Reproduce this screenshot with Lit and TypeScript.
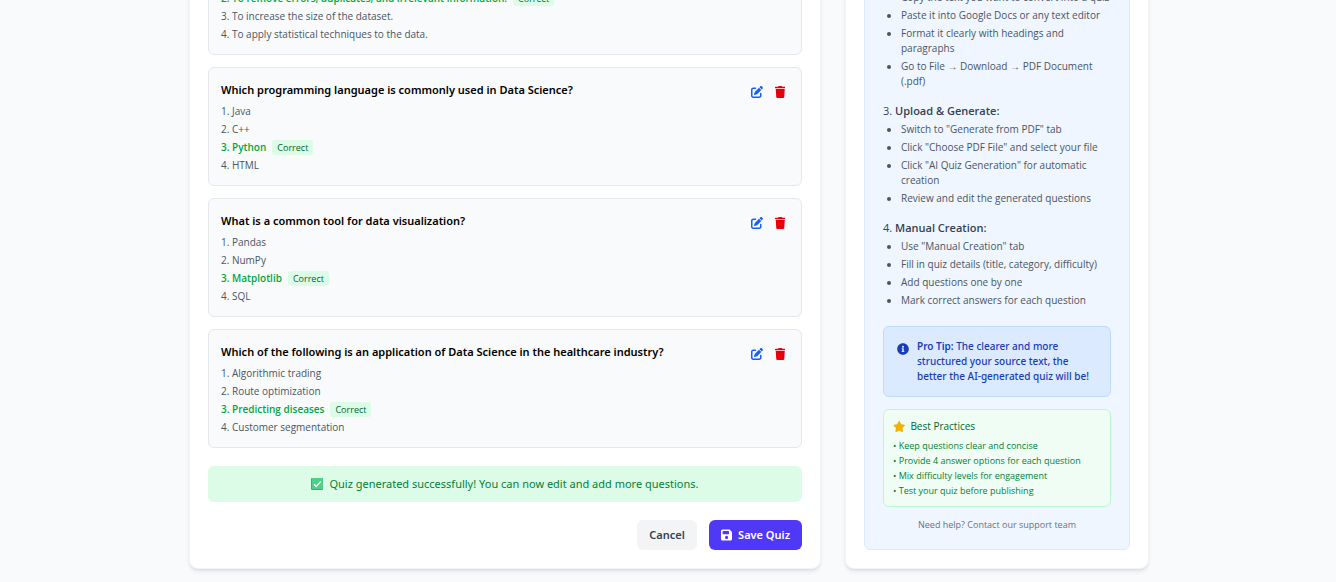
import { LitElement, html, css, svg, nothing } from "lit";
import { customElement, property, state } from "lit/decorators.js";
import { classMap } from "lit/directives/class-map.js";

interface Question {
  title?: string;
  first: number;
  options: string[];
  correct: number;
}

interface Step {
  number?: number;
  title?: string;
  items: string[];
}

const QUESTIONS: Question[] = [
  {
    first: 2,
    options: [
      "To remove errors, duplicates, and irrelevant information.",
      "To increase the size of the dataset.",
      "To apply statistical techniques to the data.",
    ],
    correct: 2,
  },
  {
    title: "Which programming language is commonly used in Data Science?",
    first: 1,
    options: ["Java", "C++", "Python", "HTML"],
    correct: 3,
  },
  {
    title: "What is a common tool for data visualization?",
    first: 1,
    options: ["Pandas", "NumPy", "Matplotlib", "SQL"],
    correct: 3,
  },
  {
    title:
      "Which of the following is an application of Data Science in the healthcare industry?",
    first: 1,
    options: [
      "Algorithmic trading",
      "Route optimization",
      "Predicting diseases",
      "Customer segmentation",
    ],
    correct: 3,
  },
];

const STEPS: Step[] = [
  {
    items: [
      "Copy the text you want to convert into a quiz",
      "Paste it into Google Docs or any text editor",
      "Format it clearly with headings and paragraphs",
      "Go to File → Download → PDF Document (.pdf)",
    ],
  },
  {
    number: 3,
    title: "Upload & Generate:",
    items: [
      'Switch to "Generate from PDF" tab',
      'Click "Choose PDF File" and select your file',
      'Click "AI Quiz Generation" for automatic creation',
      "Review and edit the generated questions",
    ],
  },
  {
    number: 4,
    title: "Manual Creation:",
    items: [
      'Use "Manual Creation" tab',
      "Fill in quiz details (title, category, difficulty)",
      "Add questions one by one",
      "Mark correct answers for each question",
    ],
  },
];

const PRACTICES = [
  "Keep questions clear and concise",
  "Provide 4 answer options for each question",
  "Mix difficulty levels for engagement",
  "Test your quiz before publishing",
];

const icon = (viewBox: string, d: string) => html`
  <svg class="icon" viewBox=${viewBox} aria-hidden="true">${svg`<path fill="currentColor" d=${d}></path>`}</svg>
`;

const editIcon = icon(
  "0 0 512 512",
  "M471.6 21.7c-21.9-21.9-57.3-21.9-79.2 0L362.3 51.7l97.9 97.9 30.1-30.1c21.9-21.9 21.9-57.3 0-79.2L471.6 21.7zm-299.2 220c-6.1 6.1-10.8 13.6-13.5 21.9l-29.6 88.8c-2.9 8.6-.6 18.1 5.8 24.6s15.9 8.7 24.6 5.8l88.8-29.6c8.2-2.7 15.7-7.4 21.9-13.5L437.7 172.3 339.7 74.3 172.4 241.7zM96 64C43 64 0 107 0 160V416c0 53 43 96 96 96H352c53 0 96-43 96-96V320c0-17.7-14.3-32-32-32s-32 14.3-32 32v96c0 17.7-14.3 32-32 32H96c-17.7 0-32-14.3-32-32V160c0-17.7 14.3-32 32-32h96c17.7 0 32-14.3 32-32s-14.3-32-32-32H96z"
);
const trashIcon = icon(
  "0 0 448 512",
  "M432 32H312l-9.4-18.7A24 24 0 0 0 281.1 0H166.8a23.72 23.72 0 0 0-21.4 13.3L136 32H16A16 16 0 0 0 0 48v32a16 16 0 0 0 16 16h416a16 16 0 0 0 16-16V48a16 16 0 0 0-16-16zM53.2 467a48 48 0 0 0 47.9 45h245.8a48 48 0 0 0 47.9-45L416 128H32z"
);
const saveIcon = icon(
  "0 16 448 480",
  "M64 32C28.7 32 0 60.7 0 96V416c0 35.3 28.7 64 64 64H384c35.3 0 64-28.7 64-64V173.3c0-17-6.7-33.3-18.7-45.3L352 50.7C340 38.7 323.7 32 306.7 32H64zm0 96c0-17.7 14.3-32 32-32H288c17.7 0 32 14.3 32 32v64c0 17.7-14.3 32-32 32H96c-17.7 0-32-14.3-32-32V128zM224 288a64 64 0 1 1 0 128 64 64 0 1 1 0-128z"
);
const infoIcon = icon(
  "0 0 512 512",
  "M256 8C119 8 8 119.1 8 256c0 137 111 248 248 248s248-111 248-248C504 119.1 393 8 256 8zm0 110c23.2 0 42 18.8 42 42s-18.8 42-42 42-42-18.8-42-42 18.8-42 42-42zm56 254c0 6.6-5.4 12-12 12h-88c-6.6 0-12-5.4-12-12v-24c0-6.6 5.4-12 12-12h12v-64h-12c-6.6 0-12-5.4-12-12v-24c0-6.6 5.4-12 12-12h64c6.6 0 12 5.4 12 12v100h12c6.6 0 12 5.4 12 12v24z"
);
const starIcon = icon(
  "0 0 576 512",
  "M259.3 17.8L194 150.2 47.9 171.5c-26.2 3.8-36.7 36.1-17.7 54.6l105.7 103-25 145.5c-4.5 26.3 23.2 46 46.4 33.7L288 439.6l130.7 68.7c23.2 12.2 50.9-7.4 46.4-33.7l-25-145.5 105.7-103c19-18.5 8.5-50.8-17.7-54.6L382 150.2 316.7 17.8c-11.7-23.6-45.6-23.9-57.4 0z"
);

@customElement("quiz-question")
class QuizQuestion extends LitElement {
  @property({ attribute: false }) question!: Question;

  static styles = css`
    :host {
      display: block;
      padding: 12px;
      border: 1px solid #e5e7eb;
      border-radius: 6px;
      background: #f9fafb;
    }
    .head {
      display: flex;
      justify-content: space-between;
      align-items: flex-start;
      min-height: 24px;
    }
    h3 {
      margin: 0;
      font-family: "Noto Sans", sans-serif;
      font-size: 11px;
      line-height: 20px;
      font-weight: 600;
      color: #000;
    }
    .actions {
      display: flex;
      gap: 5px;
    }
    button {
      display: grid;
      place-items: center;
      width: 18px;
      height: 24px;
      padding: 0;
      border: 0;
      background: none;
      cursor: pointer;
    }
    .edit {
      color: #155dfc;
    }
    .remove {
      color: #e7000b;
    }
    .icon {
      display: block;
      height: 12px;
    }
    ol {
      display: grid;
      gap: 3px;
      margin: 0;
      padding: 0;
      list-style: none;
      font-size: 10px;
      line-height: 15px;
      color: #4a5565;
    }
    li {
      display: flex;
      align-items: center;
      gap: 6px;
    }
    .right {
      font-weight: 600;
      color: #00a63e;
    }
    .badge {
      padding: 0 5px;
      border-radius: 3px;
      background: #dcfce7;
      font-size: 9px;
      font-weight: 500;
      color: #016630;
    }
  `;

  render() {
    const { title, first, options, correct } = this.question;
    return html`
      ${title
        ? html`<div class="head">
            <h3>${title}</h3>
            <div class="actions">
              <button class="edit" type="button" aria-label="Edit question">${editIcon}</button>
              <button class="remove" type="button" aria-label="Delete question">${trashIcon}</button>
            </div>
          </div>`
        : nothing}
      <ol>
        ${options.map((text, i) => {
          const n = first + i;
          return html`<li class=${classMap({ right: n === correct })}>
            <span>${n}. ${text}</span>${n === correct
              ? html`<span class="badge">Correct</span>`
              : nothing}
          </li>`;
        })}
      </ol>
    `;
  }
}

@customElement("quiz-guide")
class QuizGuide extends LitElement {
  static styles = css`
    :host {
      display: block;
      padding: 18px;
      border: 1px solid #dbeafe;
      border-radius: 6px;
      background: #eff6ff;
    }
    .icon {
      display: block;
      flex: none;
      height: 12px;
    }
    .steps {
      display: grid;
      gap: 12px;
      color: #364153;
    }
    h4 {
      margin: 0 0 1px;
      font-size: 11px;
      line-height: 20px;
      font-weight: 600;
    }
    .number {
      font-weight: 400;
    }
    .items {
      display: grid;
      gap: 3px;
      margin: 0;
      padding-left: 18px;
      font-size: 10px;
      line-height: 15px;
      color: #4a5565;
    }
    .tip {
      display: flex;
      gap: 8px;
      margin-top: 18px;
      padding: 12px 13px;
      border: 1px solid #bedbff;
      border-radius: 6px;
      background: #dbeafe;
      color: #193cb8;
    }
    .tip .icon {
      padding-top: 4px;
    }
    .tip p {
      margin: 0;
      font-family: "Noto Sans", sans-serif;
      font-size: 10px;
      line-height: 15px;
      font-weight: 500;
    }
    .tip strong {
      font-weight: 600;
    }
    .best {
      margin-top: 12px;
      padding: 9px;
      border: 1px solid #b9f8cf;
      border-radius: 6px;
      background: #f0fdf4;
    }
    .best-title {
      display: flex;
      align-items: center;
      gap: 5px;
      margin: 0 0 6px;
      font-size: 10px;
      line-height: 15px;
      font-weight: 500;
      color: #016630;
    }
    .best-title .icon {
      height: 11px;
      color: #f0b100;
    }
    .best ul {
      display: grid;
      gap: 3px;
      margin: 0;
      padding: 0;
      list-style: none;
      font-size: 9px;
      line-height: 12px;
      color: #008236;
    }
    .help {
      margin: 12px 0 0;
      font-size: 9px;
      line-height: 12px;
      text-align: center;
      color: #6a7282;
    }
  `;

  render() {
    return html`
      <div class="steps">
        ${STEPS.map(
          (step) => html`<section>
            ${step.title
              ? html`<h4><span class="number">${step.number}.</span> ${step.title}</h4>`
              : nothing}
            <ul class="items">
              ${step.items.map((item) => html`<li>${item}</li>`)}
            </ul>
          </section>`
        )}
      </div>
      <div class="tip">
        ${infoIcon}
        <p>
          <strong>Pro Tip:</strong> The clearer and more structured your source text, the better the
          AI-generated quiz will be!
        </p>
      </div>
      <div class="best">
        <h5 class="best-title">${starIcon} Best Practices</h5>
        <ul>
          ${PRACTICES.map((item) => html`<li>• ${item}</li>`)}
        </ul>
      </div>
      <p class="help">Need help? Contact our support team</p>
    `;
  }
}

@customElement("app-root")
class AppRoot extends LitElement {
  @state() private questions = QUESTIONS;

  static styles = css`
    :host {
      display: flex;
      flex-direction: column;
      justify-content: flex-end;
      box-sizing: border-box;
      height: 100vh;
      overflow: hidden;
      padding: 0 11px 13px 13px;
      background: #f9fafb;
      font-family: "Open Sans", "Noto Sans", sans-serif;
    }
    main {
      display: grid;
      grid-template-columns: minmax(0, 1fr) 304px;
      align-items: end;
      gap: 24px;
      width: 100%;
      max-width: 960px;
      margin: 0 auto;
    }
    .card {
      padding: 18px;
      border: 1px solid #f3f4f6;
      border-radius: 9px;
      background: #fff;
      box-shadow: 0 3px 5px -1px rgb(0 0 0 / 0.1), 0 2px 3px -2px rgb(0 0 0 / 0.1);
    }
    .questions {
      display: grid;
      gap: 12px;
    }
    .notice {
      display: flex;
      align-items: center;
      justify-content: center;
      gap: 6px;
      margin: 18px 0;
      padding: 9px;
      border-radius: 6px;
      background: #dcfce7;
      font-family: "Noto Sans", sans-serif;
      font-size: 11px;
      line-height: 18px;
      color: #008236;
    }
    .check {
      width: 12px;
      height: 12px;
    }
    .footer {
      display: flex;
      justify-content: flex-end;
      gap: 12px;
    }
    button {
      display: flex;
      align-items: center;
      gap: 6px;
      padding: 6px 12px;
      border: 0;
      border-radius: 6px;
      font: 600 11px/18px "Noto Sans", sans-serif;
      cursor: pointer;
    }
    .cancel {
      background: #f3f4f6;
      color: #364153;
    }
    .save {
      background: #4f39f6;
      color: #fff;
    }
    .icon {
      display: block;
      height: 12px;
    }
  `;

  render() {
    return html`
      <main>
        <div class="card">
          <div class="questions">
            ${this.questions.map(
              (q) => html`<quiz-question .question=${q}></quiz-question>`
            )}
          </div>
          <div class="notice" role="status">
            <svg class="check" viewBox="0 0 12 12" aria-hidden="true">
              <rect width="12" height="12" rx="1" fill="#2fb56c"></rect>
              <rect x="1" y="0" width="11" height="11" rx="1" fill="#4fd08a"></rect>
              <path d="M3 6.2 5.3 8.5 9.8 3.4" fill="none" stroke="#fff" stroke-width="1.4"></path>
            </svg>
            Quiz generated successfully! You can now edit and add more questions.
          </div>
          <div class="footer">
            <button class="cancel" type="button">Cancel</button>
            <button class="save" type="button">${saveIcon} Save Quiz</button>
          </div>
        </div>
        <aside class="card">
          <quiz-guide></quiz-guide>
        </aside>
      </main>
    `;
  }
}
